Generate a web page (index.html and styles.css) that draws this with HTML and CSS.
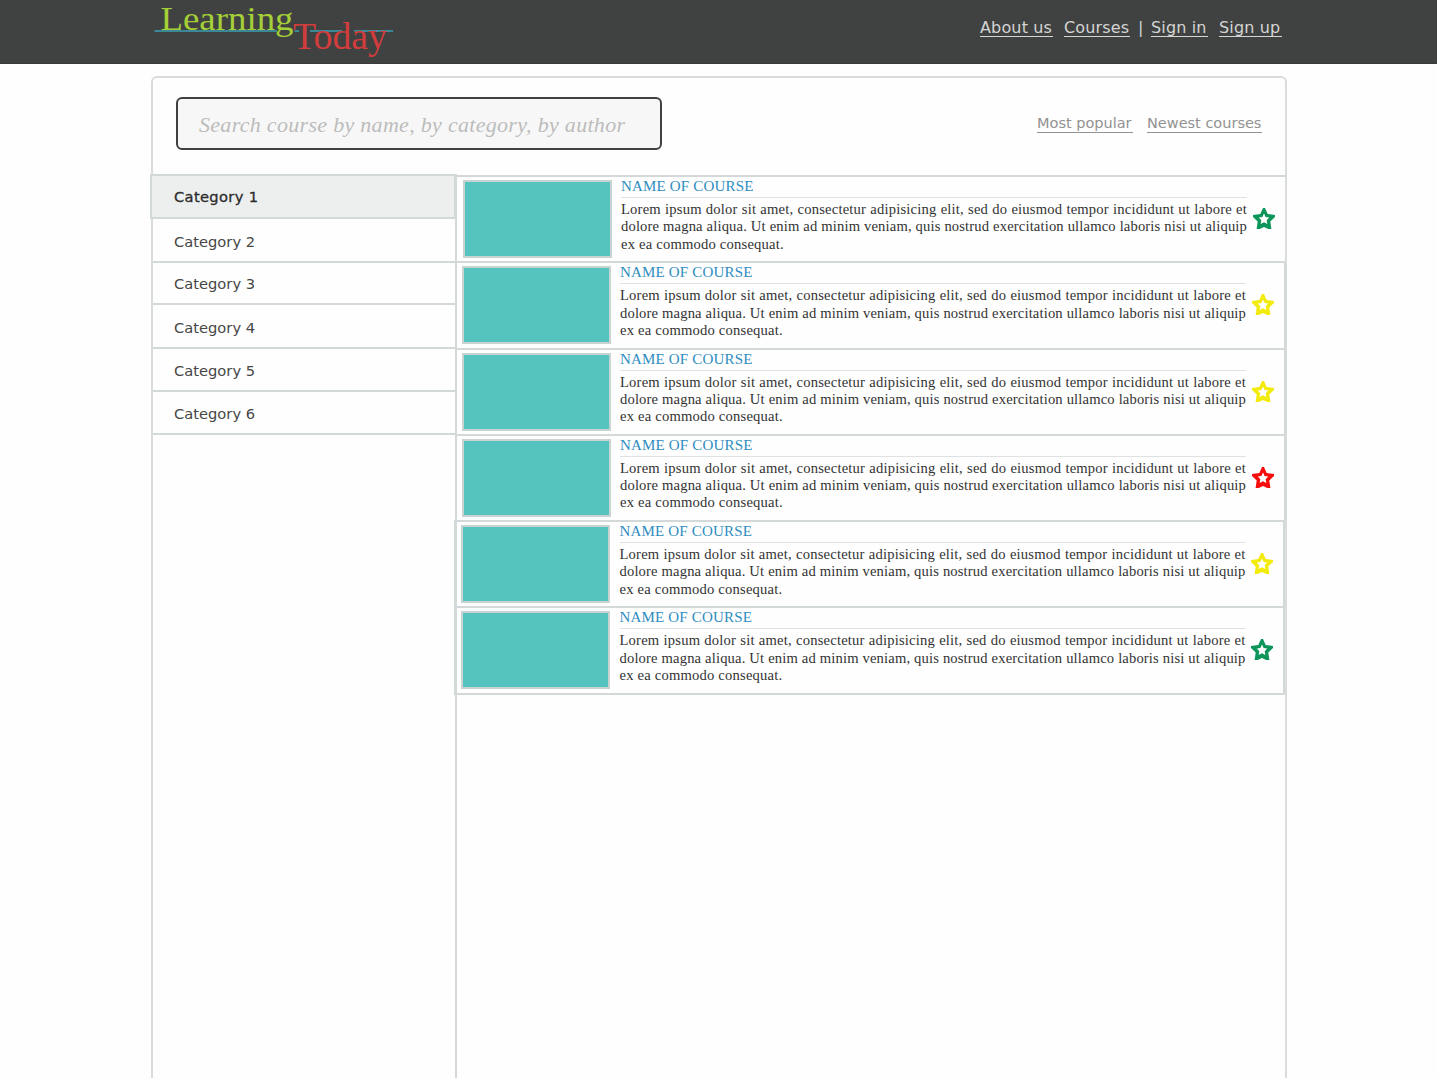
FILE: index.html
```html
<!DOCTYPE html>
<html lang="en">
<head>
<meta charset="utf-8">
<title>Learning Today</title>
<link rel="stylesheet" href="styles.css">
</head>
<body>
<svg width="0" height="0" class="defs"><symbol id="star" viewBox="0 0 24 24"><path d="M11 1 H13 L15.7 7 L23 8 V10 L18.3 14.5 L19.4 21.9 H16.200 L12 19.9 L7.800 21.9 H4.600 L5.7 14.5 L1 10 V8 L8.300 7 Z M12 6.500 L10.400 10 L6.800 10.500 L9.300 13.300 L8.700 17 L12 15.300 L15.300 17 L14.700 13.300 L17.200 10.500 L13.600 10 Z" fill="currentColor" fill-rule="evenodd"/></symbol></svg>
<header class="topbar">
  <svg class="logo" width="242" height="63" viewBox="0 0 242 63" role="img" aria-label="Learning Today">
    <path class="rule" d="M3.5 31H126M143.500 31H148M159 31H191M203 31H242"/>
    <text class="learning" x="9.500" y="30" textLength="133" lengthAdjust="spacingAndGlyphs">Learning</text>
    <text class="today" x="142" y="48.500" textLength="94" lengthAdjust="spacingAndGlyphs">Today</text>
  </svg>
  <nav class="nav">
    <a class="about">About us</a><a class="courses-link">Courses</a><span class="bar">|</span><a class="signin">Sign in</a><a class="signup">Sign up</a>
  </nav>
</header>
<main class="panel">
  <div class="tools">
    <div class="search"><span>Search course by name, by category, by author</span></div>
    <div class="sorts"><a class="popular">Most popular</a><a class="newest">Newest courses</a></div>
  </div>
  <div class="content">
    <ul class="categories">
      <li class="active">Category 1</li>
      <li>Category 2</li>
      <li>Category 3</li>
      <li>Category 4</li>
      <li>Category 5</li>
      <li>Category 6</li>
    </ul>
    <div class="courses">
      <article class="course first">
        <div class="thumb"></div>
        <div class="info"><h2><span>NAME OF COURSE</span></h2><p><span class="l1">Lorem ipsum dolor sit amet, consectetur adipisicing elit, sed do eiusmod tempor incididunt ut labore et</span><span class="l2">dolore magna aliqua. Ut enim ad minim veniam, quis nostrud exercitation ullamco laboris nisi ut aliquip</span><span class="l3">ex ea commodo consequat.</span></p></div>
        <svg class="star green"><use href="#star"/></svg>
      </article>
      <article class="course">
        <div class="thumb"></div>
        <div class="info"><h2><span>NAME OF COURSE</span></h2><p><span class="l1">Lorem ipsum dolor sit amet, consectetur adipisicing elit, sed do eiusmod tempor incididunt ut labore et</span><span class="l2">dolore magna aliqua. Ut enim ad minim veniam, quis nostrud exercitation ullamco laboris nisi ut aliquip</span><span class="l3">ex ea commodo consequat.</span></p></div>
        <svg class="star yellow"><use href="#star"/></svg>
      </article>
      <article class="course">
        <div class="thumb"></div>
        <div class="info"><h2><span>NAME OF COURSE</span></h2><p><span class="l1">Lorem ipsum dolor sit amet, consectetur adipisicing elit, sed do eiusmod tempor incididunt ut labore et</span><span class="l2">dolore magna aliqua. Ut enim ad minim veniam, quis nostrud exercitation ullamco laboris nisi ut aliquip</span><span class="l3">ex ea commodo consequat.</span></p></div>
        <svg class="star yellow"><use href="#star"/></svg>
      </article>
      <article class="course">
        <div class="thumb"></div>
        <div class="info"><h2><span>NAME OF COURSE</span></h2><p><span class="l1">Lorem ipsum dolor sit amet, consectetur adipisicing elit, sed do eiusmod tempor incididunt ut labore et</span><span class="l2">dolore magna aliqua. Ut enim ad minim veniam, quis nostrud exercitation ullamco laboris nisi ut aliquip</span><span class="l3">ex ea commodo consequat.</span></p></div>
        <svg class="star red"><use href="#star"/></svg>
      </article>
      <article class="course shifted">
        <div class="thumb"></div>
        <div class="info"><h2><span>NAME OF COURSE</span></h2><p><span class="l1">Lorem ipsum dolor sit amet, consectetur adipisicing elit, sed do eiusmod tempor incididunt ut labore et</span><span class="l2">dolore magna aliqua. Ut enim ad minim veniam, quis nostrud exercitation ullamco laboris nisi ut aliquip</span><span class="l3">ex ea commodo consequat.</span></p></div>
        <svg class="star yellow"><use href="#star"/></svg>
      </article>
      <article class="course shifted last">
        <div class="thumb"></div>
        <div class="info"><h2><span>NAME OF COURSE</span></h2><p><span class="l1">Lorem ipsum dolor sit amet, consectetur adipisicing elit, sed do eiusmod tempor incididunt ut labore et</span><span class="l2">dolore magna aliqua. Ut enim ad minim veniam, quis nostrud exercitation ullamco laboris nisi ut aliquip</span><span class="l3">ex ea commodo consequat.</span></p></div>
        <svg class="star green"><use href="#star"/></svg>
      </article>
    </div>
  </div>
</main>
</body>
</html>
```
FILE: styles.css
```css
* { box-sizing: border-box; }
html, body { height: 100%; }
body {
  margin: 0;
  height: 1078px;
  overflow: hidden;
  display: flex;
  flex-direction: column;
  background: #fefefe;
  color: #333;
  font-family: Verdana, "DejaVu Sans", sans-serif;
}
.defs { display: none; }
.topbar {
  flex: none;
  height: 64px;
  padding: 0 155px 0 151px;
  display: flex;
  justify-content: space-between;
  background: #404241;
  border-bottom: 1px solid #393b3a;
}
.logo { overflow: visible; font-family: "Liberation Serif", serif; }
.learning { font-size: 33.5px; fill: #a5cf38; }
.today { font-size: 38px; fill: #d13c3c; }
.rule { stroke: #3b8896; stroke-width: 2; }
.nav {
  display: flex;
  align-items: flex-start;
  padding-top: 18px;
  font-size: 16px;
  letter-spacing: .15px;
  line-height: 20px;
  color: #d4d5d4;
  white-space: nowrap;
}
.nav a { height: 19px; border-bottom: 1px solid #d4d5d4; }
.nav a, .bar, .sorts a { display: block; }
.about { width: 73px; margin-right: 11px; }
.courses-link { width: 66px; margin-right: 8px; }
.bar { width: 13px; }
.signin { width: 57px; margin-right: 11px; }
.signup { width: 63px; }
.panel {
  flex: none;
  width: 1136px;
  height: 1020px;
  margin: 12px 0 0 151px;
  border: 2px solid #d8dddc;
  border-radius: 6px;
  display: flex;
  flex-direction: column;
}
.tools {
  height: 97px;
  flex: none;
  padding: 19px 23px 0 23px;
  display: flex;
  justify-content: space-between;
}
.search {
  width: 486px;
  height: 53px;
  border: 2px solid #3f4141;
  border-radius: 6px;
  background: #f7f7f7;
  padding: 13px 0 0 21px;
  font: italic 22px/26px "Liberation Serif", serif;
  letter-spacing: .3px;
  color: #bcbcbc;
  white-space: nowrap;
}
.sorts {
  display: flex;
  padding-top: 18px;
  font-size: 14.5px;
  line-height: 17px;
  color: #929292;
  white-space: nowrap;
}
.sorts a { height: 18px; border-bottom: 1px solid #929292; }
.popular { width: 96px; margin-right: 14px; }
.newest { width: 115px; }
.content { flex: 1; display: flex; }
.categories {
  width: 304px;
  flex: none;
  margin: -1px 0 0;
  padding: 0;
  border-right: 2px solid #d3d9d8;
  list-style: none;
  font-size: 14.7px;
  color: #464646;
}
.categories li {
  height: 43px;
  padding: 0 0 1px 21px;
  border-bottom: 2px solid #d3d9d8;
  display: flex;
  align-items: center;
}
.categories .active {
  height: 45px;
  width: 306px;
  margin-left: -3px;
  padding-left: 22px;
  border: 2px solid #d3d9d8;
  background: #edefee;
  color: #2c2c2c;
  letter-spacing: .33px;
  -webkit-text-stroke: .3px #2c2c2c;
}
.categories li:nth-child(2) { height: 44px; padding-top: 4px; }
.categories li:nth-child(3) { height: 42px; padding-top: 2px; }
.categories li:nth-child(4) { height: 44px; padding-top: 4px; }
.categories li:nth-child(5), .categories li:nth-child(6) { padding-top: 2px; }
.courses { flex: 1; min-width: 0; font-family: "Liberation Serif", serif; }
.course {
  width: 830px;
  height: 86.25px;
  margin-left: -1px;
  border-top: 2px solid #d3d9d8;
  border-right: 2px solid #d3d9d8;
  display: flex;
  padding: 3px 0 0 6px;
}
.first { margin-left: 0; border-right: 0; }
.shifted { width: 831px; margin-left: -3px; padding-left: 5px; border-left: 2px solid #d3d9d8; }
.last { height: 88.25px; border-bottom: 2px solid #d3d9d8; }
.thumb {
  flex: none;
  width: 149px;
  height: 78px;
  border: 2px solid #c8d3d2;
  background: #56c4be;
}
.info { width: 626px; margin-left: 9px; flex: none; white-space: nowrap; }
.shifted .info { margin-left: 9.5px; }
.info h2 {
  margin: -3px 0 0;
  height: 21px;
  border-bottom: 1px solid #dfe2e2;
  font-size: 15px;
  font-weight: 400;
  line-height: 18px;
  letter-spacing: .18px;
  color: #2f8dc0;
}
.info p { margin: 3px 0 0; font-size: 14.6px; line-height: 17.25px; letter-spacing: .2px; color: #333; }
.info p span { display: block; }
.l1, .l2 { text-align-last: justify; }
.info .l2 { letter-spacing: .15px; }
.star { flex: none; width: 24px; height: 24px; margin: 27px 0 0 5px; }
.shifted .star { margin-left: 4.5px; }
.green { color: #0d955a; }
.yellow { color: #f2eb0b; }
.red { color: #f80d0d; }
```
